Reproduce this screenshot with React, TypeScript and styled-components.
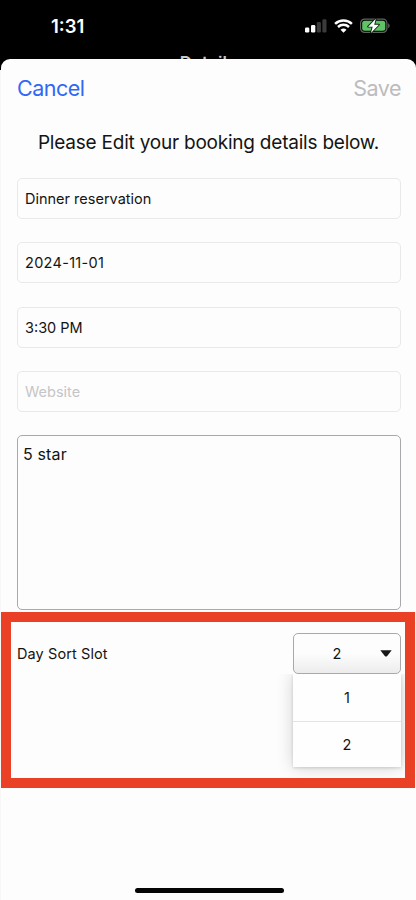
import React from "react";
import styled, { createGlobalStyle } from "styled-components";

const GlobalStyle = createGlobalStyle`
  * { box-sizing: border-box; }
  body { margin: 0; background: #000; }
`;

const Phone = styled.div`
  width: 416px;
  height: 900px;
  display: flex;
  flex-direction: column;
  overflow: hidden;
  background: linear-gradient(#000 0 70px, #f7f7f7 70px);
  font-family: Inter, "Liberation Sans", sans-serif;
  color: #141414;
`;

const Backdrop = styled.div`
  height: 59px;
  flex: none;
  display: flex;
  flex-direction: column;
  overflow: hidden;
`;

const StatusBar = styled.div`
  height: 52px;
  flex: none;
  display: flex;
  justify-content: space-between;
  align-items: center;
  padding: 0 26px 0 51px;
  color: #fff;
`;

const Clock = styled.span`
  font-size: 18.5px;
  font-weight: 600;
  letter-spacing: 0;
`;

const StatusIcons = styled.div`
  display: flex;
  align-items: center;
  gap: 7px;
`;

const ParentTitle = styled.div`
  flex: none;
  padding-top: 1px;
  text-align: center;
  font-size: 17px;
  line-height: 20px;
  font-weight: 600;
  color: #c9c9c9;
`;

const Sheet = styled.main`
  flex: 1;
  display: flex;
  flex-direction: column;
  margin: 0 0 0 1px;
  border-radius: 9px 9px 0 0;
  background: #fdfdfd;
`;

const Toolbar = styled.header`
  height: 58px;
  flex: none;
  display: flex;
  justify-content: space-between;
  align-items: center;
  padding: 0 15px 0 16px;
`;

const ToolbarButton = styled.button<{ $muted?: boolean }>`
  border: 0;
  padding: 0;
  background: none;
  font: 400 21.5px/28px Inter, sans-serif;
  letter-spacing: -0.5px;
  color: ${(p) => (p.$muted ? "#bcbcbd" : "#3068f6")};
`;

const Heading = styled.h1`
  margin: 13px 0 23px;
  text-align: center;
  font-size: 19px;
  font-weight: 400;
  line-height: 25px;
  letter-spacing: -0.22px;
  white-space: nowrap;
`;

const Fields = styled.div`
  display: flex;
  flex-direction: column;
  gap: 23.25px;
  padding: 0 15px 0 16px;
`;

const Input = styled.input<{ $tracking?: number }>`
  height: 41px;
  width: 100%;
  padding: 0 7px;
  border: 1px solid #e9e9ea;
  border-radius: 5px;
  background: #fdfdfd;
  font: 400 14.5px Inter, sans-serif;
  letter-spacing: ${(p) => p.$tracking ?? 0}px;
  color: #141414;
  outline: 0;
  &::placeholder { color: #c5c5c7; }
`;

const Notes = styled.textarea`
  display: block;
  height: 175px;
  width: 100%;
  padding: 8px 5px;
  border: 1px solid #a9a9ab;
  border-radius: 5px;
  background: #fdfdfd;
  font: 400 16px/21px Inter, sans-serif;
  letter-spacing: 0.15px;
  color: #141414;
  resize: none;
  outline: 0;
`;

const Highlight = styled.section`
  height: 176px;
  flex: none;
  display: flex;
  justify-content: space-between;
  align-items: flex-start;
  margin: 2px 1px 0 0;
  padding: 11px 4px 0 6px;
  border: 10px solid #ea4025;
`;

const SlotLabel = styled.span`
  line-height: 41px;
  font-size: 14.5px;
  letter-spacing: 0.1px;
`;

const Select = styled.div`
  position: relative;
  width: 108px;
`;

const SelectBox = styled.div`
  height: 41px;
  display: flex;
  align-items: center;
  border: 1px solid #a9a9ab;
  border-radius: 5px;
  padding-right: 8px;
  background: linear-gradient(#fdfdfd 50%, #ececec);
  font-size: 14.5px;
`;

const SelectValue = styled.span`
  flex: 1;
  text-align: center;
`;

const Menu = styled.div`
  position: absolute;
  top: 41px;
  left: 0;
  width: 108px;
  background: #fefefe;
  box-shadow: 0 1px 3px rgba(0, 0, 0, 0.14), 0 0 16px rgba(0, 0, 0, 0.18);
  clip-path: inset(0 -4px -10px -20px);
`;

const Option = styled.div`
  height: 47px;
  display: flex;
  align-items: center;
  justify-content: center;
  font-size: 14.5px;
  & + & { height: 46px; border-top: 1px solid #e3e3e3; }
`;

const Footer = styled.footer`
  margin-top: auto;
  display: flex;
  justify-content: center;
  padding: 0 0 7px 1px;
`;

const HomeIndicator = styled.div`
  width: 149px;
  height: 5px;
  border-radius: 3px;
  background: #050505;
`;

function Signal() {
  return (
    <svg width="22" height="14" viewBox="0 0 22 14">
      <rect x="0" y="8.5" width="4.3" height="5" rx="1.2" fill="#fff" />
      <rect x="6" y="6" width="4.3" height="7.5" rx="1.2" fill="#fff" />
      <rect x="11.8" y="3" width="4.1" height="10.5" rx="1.2" fill="#3b3b3b" />
      <rect x="17.4" y="0.3" width="4.1" height="13.2" rx="1.2" fill="#3b3b3b" />
    </svg>
  );
}

function Wifi() {
  return (
    <svg width="19" height="14" viewBox="0 0 19 14" fill="none" stroke="#fff" strokeWidth="2.5">
      <path d="M1.1 4.8a12.2 12.2 0 0 1 16.8 0" />
      <path d="M4 8a8.1 8.1 0 0 1 11 0" />
      <path d="M9.5 13.8 6.5 10.8a4.4 4.4 0 0 1 6 0Z" fill="#fff" stroke="none" />
    </svg>
  );
}

function Battery() {
  return (
    <svg width="30" height="16" viewBox="0 0 30 16">
      <rect x="0.6" y="1.1" width="26.3" height="13.3" rx="4" fill="none" stroke="#626262" strokeWidth="1.2" />
      <rect x="2.2" y="2.7" width="23.1" height="10.1" rx="2.5" fill="#5ec466" />
      <path d="M28.2 5.3c1.9.8 1.9 4.2 0 5Z" fill="#626262" />
      <path
        d="M15.8 0.8 8.1 8.7h4.6l-1.8 6.2 8-8.2h-4.7Z"
        fill="#fff"
        stroke="#08200a"
        strokeWidth="1.8"
        paintOrder="stroke"
        strokeLinejoin="round"
      />
    </svg>
  );
}

function Caret() {
  return (
    <svg width="12" height="7" viewBox="0 0 12 7">
      <path d="M0.3 0.2h11.4L7.2 5.9a1.6 1.6 0 0 1-2.4 0Z" fill="#171717" />
    </svg>
  );
}

const fields = [
  { name: "title", value: "Dinner reservation" },
  { name: "date", value: "2024-11-01", tracking: 0.3 },
  { name: "time", value: "3:30 PM" },
  { name: "website", value: "", placeholder: "Website" },
];

export default function App() {
  return (
    <Phone>
      <GlobalStyle />
      <Backdrop>
        <StatusBar>
          <Clock>1:31</Clock>
          <StatusIcons>
            <Signal />
            <Wifi />
            <Battery />
          </StatusIcons>
        </StatusBar>
        <ParentTitle>Details</ParentTitle>
      </Backdrop>
      <Sheet>
        <Toolbar>
          <ToolbarButton>Cancel</ToolbarButton>
          <ToolbarButton $muted>Save</ToolbarButton>
        </Toolbar>
        <Heading>Please Edit your booking details below.</Heading>
        <Fields>
          {fields.map((f) => (
            <Input
              key={f.name}
              name={f.name}
              defaultValue={f.value}
              placeholder={f.placeholder}
              $tracking={f.tracking}
              spellCheck={false}
            />
          ))}
          <Notes defaultValue="5 star" spellCheck={false} />
        </Fields>
        <Highlight>
          <SlotLabel>Day Sort Slot</SlotLabel>
          <Select>
            <SelectBox>
              <SelectValue>2</SelectValue>
              <Caret />
            </SelectBox>
            <Menu>
              <Option>1</Option>
              <Option>2</Option>
            </Menu>
          </Select>
        </Highlight>
        <Footer>
          <HomeIndicator />
        </Footer>
      </Sheet>
    </Phone>
  );
}
